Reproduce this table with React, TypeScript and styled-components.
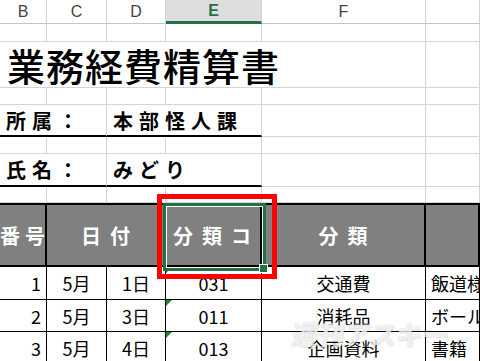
import React from "react";
import styled, { createGlobalStyle, css } from "styled-components";

const GRID = "#d4d4d4";
const EXCEL_GREEN = "#217346";
const JP = `"Noto Sans CJK JP", "Noto Sans", sans-serif`;

const GlobalStyle = createGlobalStyle`
  html, body {
    margin: 0;
    padding: 0;
    background: #fff;
  }
  body {
    font-family: ${JP};
    color: #000;
  }
`;

const Sheet = styled.div`
  position: relative;
  display: grid;
  grid-template-columns: 47px 60px 59px 96px 164px 54px;
  grid-template-rows: 24px 18px 46px 17px 32px 17px 33px 16px 64px 33px 32px 32px;
  width: 480px;
  height: 361px;
  overflow: hidden;
  background: #fff;
`;

type Align = "left" | "center" | "right";

const justify = (a?: Align) => (a === "left" ? "flex-start" : a === "right" ? "flex-end" : "center");

const Cell = styled.div<{ $span?: number; $align?: Align }>`
  grid-column: span ${({ $span }) => $span ?? 1};
  display: flex;
  align-items: center;
  justify-content: ${({ $align }) => justify($align)};
  box-sizing: border-box;
  border-right: 1px solid ${GRID};
  border-bottom: 1px solid ${GRID};
  overflow: hidden;
  white-space: nowrap;
`;

const ColHeader = styled(Cell)<{ $active?: boolean }>`
  font-family: "Liberation Sans", Arial, sans-serif;
  font-size: 16px;
  color: #444;
  border-bottom: 1px solid #c6c6c6;
  ${({ $active }) =>
    $active &&
    css`
      background: #dedede;
      color: ${EXCEL_GREEN};
      font-weight: 700;
      border-bottom: 3px solid ${EXCEL_GREEN};
    `}
`;

const TitleCell = styled(Cell)`
  align-items: flex-end;
  padding: 0 0 3px 7px;
  font-size: 38px;
  font-weight: 500;
  letter-spacing: 1px;
  line-height: 1;
`;

const FieldCell = styled(Cell)<{ $indent: number }>`
  padding-left: ${({ $indent }) => $indent}px;
  font-size: 20px;
  font-weight: 700;
  letter-spacing: 6px;
  border-bottom: 2px solid #000;
`;

const HeadCell = styled(Cell)<{ $indent?: number; $spacing?: number }>`
  padding-left: ${({ $indent }) => $indent ?? 0}px;
  background: #808080;
  color: #fff;
  font-size: 20px;
  font-weight: 700;
  letter-spacing: ${({ $spacing }) => $spacing ?? 9}px;
  border-top: 2px solid #000;
  border-bottom: 2px solid #000;
  border-right: 2px solid #000;
`;

const DataCell = styled(Cell)<{ $flag?: boolean }>`
  position: relative;
  padding: 0 5px;
  font-size: 18px;
  font-weight: 400;
  border-right: 1px solid #000;
  border-bottom: 1px solid #000;
  ${({ $flag }) =>
    $flag &&
    css`
      &::before {
        content: "";
        position: absolute;
        left: 0;
        top: 0;
        border-top: 6px solid #1c8a3b;
        border-right: 6px solid transparent;
      }
    `}
`;

const Selection = styled.div`
  position: absolute;
  left: 163px;
  top: 203px;
  width: 103px;
  height: 68px;
  box-sizing: border-box;
  border: 3px solid ${EXCEL_GREEN};
  box-shadow: inset 0 0 0 1px #fff;
  pointer-events: none;
`;

const FillHandle = styled.div`
  position: absolute;
  right: -5px;
  bottom: -5px;
  width: 7px;
  height: 7px;
  background: ${EXCEL_GREEN};
  border: 1px solid #fff;
`;

const Callout = styled.div`
  position: absolute;
  left: 157px;
  top: 194px;
  width: 120px;
  height: 85px;
  box-sizing: border-box;
  border: 5px solid #ff0000;
  pointer-events: none;
`;

const Watermark = styled.div`
  position: absolute;
  left: 292px;
  top: 314px;
  font-family: ${JP};
  font-size: 27px;
  font-weight: 900;
  letter-spacing: -1px;
  color: rgba(255, 255, 255, 0.75);
  text-shadow: 0 0 1px rgba(0, 0, 0, 0.18), 1px 1px 1px rgba(0, 0, 0, 0.08);
  transform: skewX(-8deg);
  pointer-events: none;
`;

const columns = ["B", "C", "D", "E", "F", ""];

const rows = [
  { no: "1", month: "5月", day: "1日", code: "031", kind: "交通費", note: "飯道様" },
  { no: "2", month: "5月", day: "3日", code: "011", kind: "消耗品", note: "ボールペン" },
  { no: "3", month: "5月", day: "4日", code: "013", kind: "企画資料", note: "書籍" },
];

const BlankRow: React.FC = () => (
  <>
    {columns.map((_, i) => (
      <Cell key={i} />
    ))}
  </>
);

export default function App() {
  return (
    <>
      <GlobalStyle />
      <Sheet>
        {columns.map((c, i) => (
          <ColHeader key={i} $active={c === "E"}>
            {c}
          </ColHeader>
        ))}

        <BlankRow />

        <TitleCell $span={5} $align="left">
          業務経費精算書
        </TitleCell>
        <Cell />

        <BlankRow />

        <FieldCell $span={2} $align="left" $indent={6}>
          所属：
        </FieldCell>
        <FieldCell $span={2} $align="left" $indent={6}>
          本部怪人課
        </FieldCell>
        <Cell />
        <Cell />

        <BlankRow />

        <FieldCell $span={2} $align="left" $indent={6}>
          氏名：
        </FieldCell>
        <FieldCell $span={2} $align="left" $indent={6}>
          みどり
        </FieldCell>
        <Cell />
        <Cell />

        <BlankRow />

        <HeadCell $spacing={5} $indent={5}>
          番号
        </HeadCell>
        <HeadCell $span={2} $indent={9}>
          日付
        </HeadCell>
        <HeadCell $align="left" $indent={7}>
          分類コード
        </HeadCell>
        <HeadCell $indent={9}>分類</HeadCell>
        <HeadCell />

        {rows.map((r) => (
          <React.Fragment key={r.no}>
            <DataCell $align="right">{r.no}</DataCell>
            <DataCell>{r.month}</DataCell>
            <DataCell>{r.day}</DataCell>
            <DataCell $flag>{r.code}</DataCell>
            <DataCell>{r.kind}</DataCell>
            <DataCell $align="left">{r.note}</DataCell>
          </React.Fragment>
        ))}

        <Selection>
          <FillHandle />
        </Selection>
        <Callout />
        <Watermark>週刊アスキー</Watermark>
      </Sheet>
    </>
  );
}
